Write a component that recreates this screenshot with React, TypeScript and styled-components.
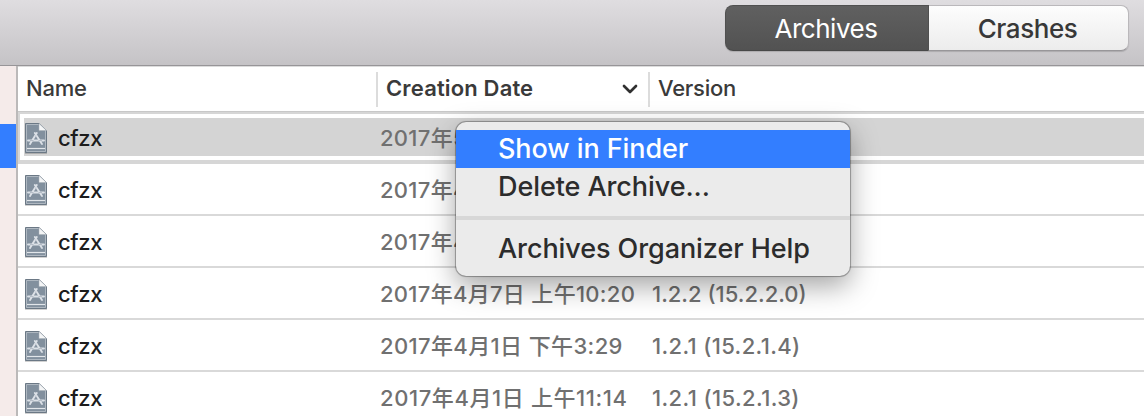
import React from 'react';
import styled, { createGlobalStyle } from 'styled-components';

const GlobalStyle = createGlobalStyle`
  * { box-sizing: border-box; }
  body {
    margin: 0;
    overflow: hidden;
    font-family: Inter, "Noto Sans CJK SC", sans-serif;
    font-weight: 450;
    color: #333;
  }
`;

const Window = styled.div`
  position: relative;
  display: flex;
  flex-direction: column;
  width: 1144px;
  height: 416px;
  overflow: hidden;
  background: #fff;
`;

const Toolbar = styled.header`
  flex: none;
  display: flex;
  justify-content: flex-end;
  height: 66px;
  padding: 5px 15px 0 0;
  background: linear-gradient(#dfdde0, #c5c3c6);
  border-bottom: 1px solid #979598;
`;

const Segments = styled.div`
  display: flex;
  height: 46px;
  border-radius: 8px;
  box-shadow: 0 1px 1px rgba(0, 0, 0, 0.15);
`;

const Segment = styled.button<{ $active?: boolean }>`
  width: ${p => (p.$active ? 204 : 200)}px;
  height: 46px;
  padding: 2px 2px 0 0;
  border: 1px solid ${p => (p.$active ? '#505050' : '#bab8bb')};
  border-left-width: ${p => (p.$active ? 1 : 0)}px;
  border-bottom-color: ${p => (p.$active ? '#484848' : '#989699')};
  border-radius: ${p => (p.$active ? '8px 0 0 8px' : '0 8px 8px 0')};
  background: ${p => (p.$active ? 'linear-gradient(#606060, #525252)' : 'linear-gradient(#fdfdfd, #ececec)')};
  color: ${p => (p.$active ? '#fff' : '#383838')};
  font: ${p => (p.$active ? 400 : 450)} 26px/42px Inter, sans-serif;
  letter-spacing: -0.45px;
`;

const Body = styled.div`
  flex: 1;
  display: flex;
  min-height: 0;
`;

const Sidebar = styled.aside`
  width: 18px;
  padding-top: 58px;
  background: #f5ebea;
  border-right: 2px solid #bbb9b9;
`;

const SidebarSelection = styled.div`
  height: 44px;
  background: #337eff;
`;

const Table = styled.main`
  flex: 1;
  display: flex;
  flex-direction: column;
`;

const HeaderRow = styled.div`
  flex: none;
  display: flex;
  height: 46px;
  padding-top: 5px;
  border-top: 1px solid #dcdcdc;
  border-bottom: 1px solid #c8c8c8;
`;

const HeaderCell = styled.div<{ $width: number; $sorted?: boolean }>`
  display: flex;
  align-items: center;
  justify-content: space-between;
  width: ${p => p.$width}px;
  height: 35px;
  padding: 0 10px 0 8px;
  border-right: 2px solid #dcdcdc;
  font-size: 22px;
  font-weight: ${p => (p.$sorted ? 600 : 450)};
  letter-spacing: ${p => (p.$sorted ? 0.15 : -0.25)}px;
  color: #3a3a3a;
  &:last-child { border-right: 0; }
`;

const HeaderLabel = styled.span`
  padding-bottom: 4px;
`;

const Row = styled.div<{ $selected?: boolean }>`
  flex: none;
  display: flex;
  align-items: center;
  height: 52px;
  padding: 3px 0 0 6px;
  border-bottom: 2px solid #d9d9d9;
  background: #fff;
  ${p => p.$selected && `
    padding-left: 4px;
    border: solid #d6d6d6;
    border-width: 2px 0 4px 2px;
    box-shadow: inset 4px 4px #fff, inset 0 -4px #fff;
    background: #d4d4d4;
  `}
`;

const NameCell = styled.div`
  display: flex;
  align-items: center;
  gap: 10px;
  width: 356px;
  font-size: 22px;
  letter-spacing: -0.4px;
  color: #1c1c1c;
`;

const NameLabel = styled.span`
  padding-bottom: 2px;
`;

const DateCell = styled.div<{ $spacing: number }>`
  width: 272px;
  padding-bottom: 1px;
  white-space: nowrap;
  font-size: 22px;
  line-height: 32px;
  letter-spacing: ${p => p.$spacing}px;
  color: #707070;
`;

const VersionCell = styled.div<{ $spacing: number }>`
  padding-bottom: 2px;
  white-space: nowrap;
  font-size: 22px;
  letter-spacing: ${p => p.$spacing}px;
  color: #707070;
`;

const Menu = styled.div`
  position: absolute;
  left: 456px;
  top: 122px;
  width: 394px;
  height: 154px;
  padding-top: 8px;
  border-radius: 10px;
  background: #ebebeb;
  box-shadow: 0 0 0 1px rgba(0, 0, 0, 0.2), 0 0 2px rgba(0, 0, 0, 0.4), 0 10px 28px rgba(0, 0, 0, 0.36);
`;

const MenuItem = styled.div<{ $active?: boolean }>`
  height: 38px;
  padding-left: 42px;
  font-size: 27px;
  line-height: 38px;
  letter-spacing: -0.08px;
  color: ${p => (p.$active ? '#fff' : '#2c2c2c')};
  background: ${p => (p.$active ? '#337eff' : 'transparent')};
`;

const Separator = styled.div`
  height: 4px;
  margin: 10px 0;
  background: #d7d7d7;
`;

const IconSvg = styled.svg`
  flex: none;
`;

const ArchiveIcon = () => (
  <IconSvg width="24" height="34" viewBox="0 0 24 34" fill="none">
    <path d="M1 3h14.500l7.500 7.500v21.500H1z" fill="#000" opacity=".18" />
    <path d="M1.500 1.500h13.500l7.500 7V30.500h-21z" fill="#82909e" stroke="#6b7885" />
    <path d="M2.500 29.500v-27h12M21.500 9v20.500h-19" stroke="#aeb7c0" />
    <path d="M3 26.500h18" stroke="#e2e6ea" strokeWidth="1.200" />
    <path d="M15 1.500v7h7.500z" fill="#f4f5f6" stroke="#a9b1b9" strokeWidth=".5" />
    <g stroke="#dce1e7" strokeWidth="1.900" strokeLinecap="round">
      <path d="m12.800 11-6.800 11M10.800 11l7.200 11M4 18.500h16" />
    </g>
    <path d="M11.800 13.500v3M6 18.500h3.500M14.500 18.500H18" stroke="#9aa5b1" strokeWidth=".6" />
  </IconSvg>
);

const SortArrow = () => (
  <svg width="16" height="14" viewBox="0 0 16 14" fill="none">
    <path d="m2 3 6 6 6-6" stroke="#303030" strokeWidth="2.700" strokeLinecap="round" strokeLinejoin="round" />
  </svg>
);

const archives = [
  { date: '2017年5', version: '', dateSpacing: 0.3, versionSpacing: 0 },
  { date: '2017年4', version: '', dateSpacing: 0.3, versionSpacing: 0 },
  { date: '2017年4', version: '', dateSpacing: 0.3, versionSpacing: 0 },
  { date: '2017年4月7日 上午10:20', version: '1.2.2 (15.2.2.0)', dateSpacing: 0.3, versionSpacing: 0 },
  { date: '2017年4月1日 下午3:29', version: '1.2.1 (15.2.1.4)', dateSpacing: 0.38, versionSpacing: 0.36 },
  { date: '2017年4月1日 上午11:14', version: '1.2.1 (15.2.1.3)', dateSpacing: 0.6, versionSpacing: 0.4 },
];

export default function App() {
  return (
    <Window>
      <GlobalStyle />
      <Toolbar>
        <Segments>
          <Segment $active>Archives</Segment>
          <Segment>Crashes</Segment>
        </Segments>
      </Toolbar>
      <Body>
        <Sidebar><SidebarSelection /></Sidebar>
        <Table>
          <HeaderRow>
            <HeaderCell $width={360}><HeaderLabel>Name</HeaderLabel></HeaderCell>
            <HeaderCell $width={272} $sorted><HeaderLabel>Creation Date</HeaderLabel><SortArrow /></HeaderCell>
            <HeaderCell $width={494}><HeaderLabel>Version</HeaderLabel></HeaderCell>
          </HeaderRow>
          {archives.map((a, i) => (
            <Row key={i} $selected={i === 0}>
              <NameCell><ArchiveIcon /><NameLabel>cfzx</NameLabel></NameCell>
              <DateCell $spacing={a.dateSpacing}>{a.date}</DateCell>
              <VersionCell $spacing={a.versionSpacing}>{a.version}</VersionCell>
            </Row>
          ))}
        </Table>
      </Body>
      <Menu>
        <MenuItem $active>Show in Finder</MenuItem>
        <MenuItem>Delete Archive...</MenuItem>
        <Separator />
        <MenuItem>Archives Organizer Help</MenuItem>
      </Menu>
    </Window>
  );
}
